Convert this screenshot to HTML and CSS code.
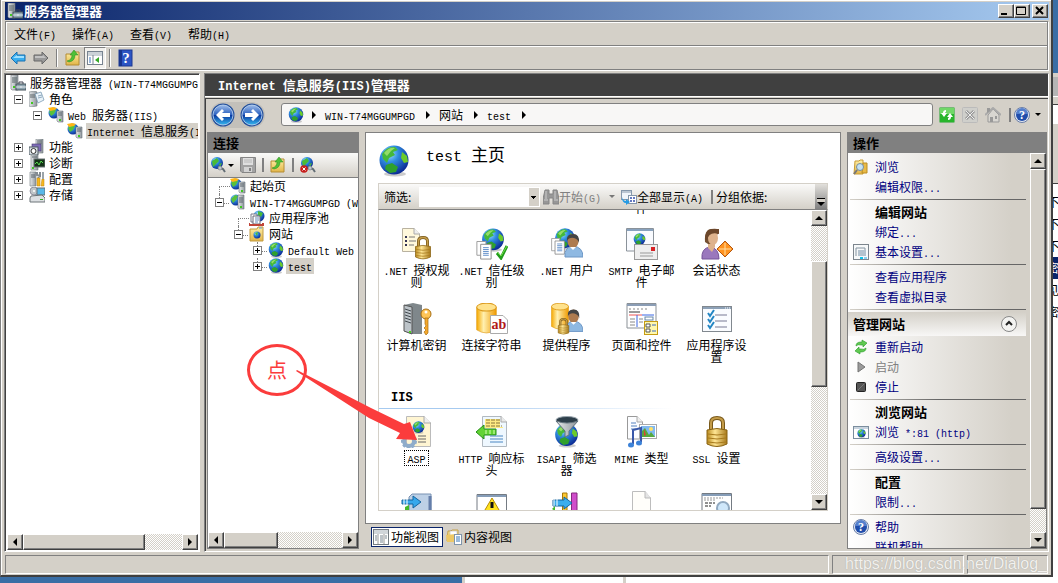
FILE: index.html
```html
<!DOCTYPE html>
<html lang="zh-CN">
<head>
    <meta charset="UTF-8">
    <meta name="viewport" content="width=device-width, initial-scale=1.0">
    <title>服务器管理器</title>
    <link rel="stylesheet" href="styles.css">
</head>
<body>
    <!-- Icon set -->
    <svg class="sprite" aria-hidden="true">
        <defs>
            <radialGradient id="sea" cx="35%" cy="28%" r="75%">
                <stop offset="0" stop-color="#9fe4ff"/><stop offset=".4" stop-color="#2f8ce0"/><stop offset="1" stop-color="#0b2a94"/>
            </radialGradient>
            <linearGradient id="gold" x1="0" x2="1" y1="0" y2="0">
                <stop offset="0" stop-color="#b98a1e"/><stop offset=".4" stop-color="#ffe694"/><stop offset="1" stop-color="#a8791a"/>
            </linearGradient>
            <linearGradient id="orange" x1="0" x2="1" y1="0" y2="0">
                <stop offset="0" stop-color="#f5a800"/><stop offset=".35" stop-color="#fff0b0"/><stop offset="1" stop-color="#f09a00"/>
            </linearGradient>
            <linearGradient id="steel" x1="0" x2="1" y1="0" y2="0">
                <stop offset="0" stop-color="#e8eaec"/><stop offset="1" stop-color="#8c949a"/>
            </linearGradient>
            <linearGradient id="orb" x1="0" x2="0" y1="0" y2="1">
                <stop offset="0" stop-color="#9dbbe8"/><stop offset=".48" stop-color="#2d62c0"/><stop offset=".52" stop-color="#0c3aa0"/><stop offset="1" stop-color="#35b8f0"/>
            </linearGradient>
            <linearGradient id="folder" x1="0" x2="0" y1="0" y2="1">
                <stop offset="0" stop-color="#fff0a8"/><stop offset="1" stop-color="#e2b548"/>
            </linearGradient>
        </defs>
        <symbol id="globe" viewBox="0 0 32 32">
            <ellipse cx="17" cy="29" rx="11" ry="2.500" fill="#999" opacity=".5"/>
            <circle cx="16" cy="15" r="14.500" fill="url(#sea)"/>
            <path d="M4 9Q9 1 17 2L20 5L15 7L17 10L11 13L9 18L5 14Z" fill="#45b83a"/>
            <path d="M24 7L29 11L30 17L26 18L23 13Z" fill="#6ccb2a"/>
            <path d="M8 20L14 18L20 22L18 27L12 28L7 24Z" fill="#2fa02c"/>
            <path d="M6 8Q11 2 17 3L13 6L9 11Z" fill="#b6ec7c" opacity=".7"/>
        </symbol>
        <symbol id="manager" viewBox="0 0 16 16">
            <path d="M1 0H8V15H2L1 14Z" fill="url(#steel)" stroke="#6c7478" stroke-width=".6"/>
            <path d="M2 3H7M2 5H7M2 7H7" stroke="#536064"/>
            <rect x="3" y="11" width="2" height="2" fill="#3fc820"/>
            <path d="M9 9V7H13V9" fill="none" stroke="#445"/>
            <rect x="6" y="9" width="10" height="6" fill="#8ea4b0" stroke="#44525a"/>
            <path d="M6 12H16M11 11V13" stroke="#e4eaee"/>
        </symbol>
        <symbol id="roles" viewBox="0 0 16 16">
            <path d="M0 1L6 0L8 1V15L2 16L0 15Z" fill="url(#steel)" stroke="#70787e" stroke-width=".6"/>
            <path d="M1 4H6M1 6H6" stroke="#5b6468"/><rect x="2" y="11" width="2" height="2" fill="#3fc820"/>
            <path d="M6 3L12 1L15 9L9 12Z" fill="#e9f3fa" stroke="#6f90aa" stroke-width=".7"/>
            <path d="M9 5L13 4M9 7L13 6" stroke="#7797b0" stroke-width=".8"/>
        </symbol>
        <symbol id="webserver" viewBox="0 0 16 16">
            <circle cx="6" cy="6" r="5.500" fill="url(#sea)"/>
            <path d="M1 5L5 2L8 3L6 7L3 9Z" fill="#58c13a"/>
            <path d="M0 1L5 0L9 1L7 3L2 4Z" fill="#ffb514"/>
            <path d="M9 4H15V15H10L9 14Z" fill="url(#steel)" stroke="#687278" stroke-width=".6"/>
            <path d="M10 6H14M10 8H14" stroke="#58636a"/><rect x="11" y="12" width="2" height="2" fill="#3fc820"/>
        </symbol>
        <symbol id="site-server" viewBox="0 0 16 16">
            <circle cx="6" cy="6" r="5.500" fill="url(#sea)"/>
            <path d="M1 5L5 1L8 2L6 6L3 9Z" fill="#58c13a"/>
            <path d="M8 1H14V15H9L8 14Z" fill="url(#steel)" stroke="#687278" stroke-width=".6"/>
            <path d="M9 4H13M9 6H13M9 8H13" stroke="#58636a"/><rect x="10" y="12" width="2" height="2" fill="#3fc820"/>
        </symbol>
        <symbol id="features" viewBox="0 0 16 16">
            <path d="M7 0H14V14H7Z" fill="url(#steel)" stroke="#70787e" stroke-width=".6"/><path d="M8 2H13M8 4H13" stroke="#59636a"/>
            <rect x="3" y="5" width="9" height="7" fill="#7e6db8" stroke="#43386e" stroke-width=".6"/>
            <rect x="0" y="8" width="9" height="8" fill="#d8e0e6" stroke="#4b575f"/><circle cx="4.500" cy="12" r="2.500" fill="#fff" stroke="#333"/>
        </symbol>
        <symbol id="diag" viewBox="0 0 16 16">
            <path d="M2 0H9V15H2Z" fill="url(#steel)" stroke="#70787e" stroke-width=".6"/><path d="M3 2H8" stroke="#59636a"/>
            <rect x="3" y="12" width="2" height="2" fill="#3fc820"/>
            <rect x="5" y="4" width="11" height="8" fill="#153218" stroke="#6d7478"/><path d="M6 9L8 7L10 10L12 6L14 8" fill="none" stroke="#58dc50"/>
        </symbol>
        <symbol id="config" viewBox="0 0 16 16">
            <path d="M1 1H7V15H1Z" fill="url(#steel)" stroke="#70787e" stroke-width=".6"/><path d="M2 4H6M2 6H6" stroke="#59636a"/>
            <path d="M8 1V4L11 5V1M9.500 4V8" fill="none" stroke="#848c92" stroke-width="2"/>
            <path d="M8 7H11V15H8ZM13 8H15V15H12Z" fill="#f7b81c" stroke="#bb8110" stroke-width=".5"/><path d="M14 1V8" stroke="#9ba4aa" stroke-width="2"/>
        </symbol>
        <symbol id="storage" viewBox="0 0 16 16">
            <circle cx="5" cy="4" r="4" fill="#bfc5c8" stroke="#778" stroke-width=".7"/><circle cx="5" cy="4" r="1" fill="#fff"/>
            <rect x="8" y="1" width="8" height="7" fill="#58b8e8" stroke="#637078"/>
            <path d="M2 9L13 8L16 11V15H1V11Z" fill="#dde0e3" stroke="#6c7478"/><rect x="11" y="12" width="3" height="1" fill="#2fb420"/>
        </symbol>
        <symbol id="arrow-l" viewBox="0 0 16 14">
            <path d="M7 1V4H15V10H7V13L1 7Z" fill="#39aef0" stroke="#1a70b0"/><path d="M3 7L7 4V5H14V7Z" fill="#9ee0ff"/>
        </symbol>
        <symbol id="arrow-r" viewBox="0 0 16 14">
            <path d="M9 1V4H1V10H9V13L15 7Z" fill="#999" stroke="#686868"/><path d="M2 5H10V4L13 7H2Z" fill="#c2c2c2"/>
        </symbol>
        <symbol id="folder-up" viewBox="0 0 16 16">
            <path d="M1 4H8L9 2H14V15H1Z" fill="url(#folder)" stroke="#b48c34"/>
            <path d="M2 11Q7 10 7 5H5L9 0L13 5H10Q10 11 4 12Z" fill="#4fc038" stroke="#26861c" stroke-width=".5"/>
        </symbol>
        <symbol id="console" viewBox="0 0 16 16">
            <rect x=".5" y="1.500" width="15" height="13" fill="#fff" stroke="#778390"/><path d="M1 3H15M1 5H15" stroke="#97a4b0"/>
            <path d="M6 5V14" stroke="#778390"/><path d="M2 8H4M2 10H4M2 12H4" stroke="#3b75bb"/><path d="M12 7V13L8 10Z" fill="#35a828"/>
        </symbol>
        <symbol id="helpbox" viewBox="0 0 16 18">
            <rect x="1" y="1" width="13" height="16" fill="#2c55c4" stroke="#1c3892"/><path d="M1 1H4V17H1Z" fill="#18358e"/>
            <text x="8" y="14" text-anchor="middle" class="help-mark">?</text>
        </symbol>
        <symbol id="help" viewBox="0 0 16 16">
            <circle cx="8" cy="8" r="7.500" fill="#e4e9f2" stroke="#697da6"/><circle cx="8" cy="8" r="6" fill="#204dab"/><path d="M2 7A6 6 0 0 1 14 7Z" fill="#557fcc"/>
            <text x="8" y="12" text-anchor="middle" class="help-mark small">?</text>
        </symbol>
        <symbol id="orb-l" viewBox="0 0 24 24">
            <circle cx="12" cy="12" r="11.500" fill="#24509c"/><circle cx="12" cy="12" r="10" fill="url(#orb)" stroke="#c4dcf5" stroke-width=".8"/>
            <path d="M11 6L5 12L11 18L13 16L11 14H19V10H11L13 8Z" fill="#fff"/>
        </symbol>
        <symbol id="orb-r" viewBox="0 0 24 24">
            <circle cx="12" cy="12" r="11.500" fill="#24509c"/><circle cx="12" cy="12" r="10" fill="url(#orb)" stroke="#c4dcf5" stroke-width=".8"/>
            <path d="M13 6L19 12L13 18L11 16L13 14H5V10H13L11 8Z" fill="#fff"/>
        </symbol>
        <symbol id="refresh" viewBox="0 0 16 16">
            <rect x=".5" y=".5" width="15" height="15" rx="1" fill="#28b52c" stroke="#77b977"/><path d="M1 1H15V7H1Z" fill="#70d867"/>
            <path d="M7 3Q4 3 4 6H2L5 10L8 6H6Q6 5 7 5ZM9 13Q12 13 12 10H14L11 6L8 10H10Q10 11 9 11Z" fill="#fff"/>
        </symbol>
        <symbol id="stop" viewBox="0 0 16 16">
            <rect x=".5" y=".5" width="15" height="15" rx="1" fill="#cfcfcb" stroke="#bbb"/><path d="M4 4L12 12M12 4L4 12" stroke="#999" stroke-width="3"/><path d="M4 4L12 12M12 4L4 12" stroke="#eee"/>
        </symbol>
        <symbol id="home" viewBox="0 0 16 16">
            <path d="M3 8V15H14V8L8 2Z" fill="#d8d6d1" stroke="#999"/><path d="M0 8L8 1L16 8" fill="none" stroke="#aaa" stroke-width="2"/><path d="M2 1H5V4L2 6Z" fill="#999"/><path d="M5 10H8V15H5ZM10 9H12V12H10Z" fill="#999"/>
        </symbol>
        <symbol id="globe-plug" viewBox="0 0 16 16">
            <circle cx="7" cy="6" r="6" fill="url(#sea)"/><path d="M2 4L7 1L9 4L5 8L3 10ZM9 7L12 6L10 10Z" fill="#4abb37"/><path d="M8 10L13 12L15 15" fill="none" stroke="#626d74" stroke-width="2"/><circle cx="10" cy="11" r="2" fill="#bbc4ca" stroke="#67717a" stroke-width=".6"/>
        </symbol>
        <symbol id="globe-cut" viewBox="0 0 16 16">
            <use href="#globe-plug"/><circle cx="4" cy="12" r="3.800" fill="#c61f1d"/><path d="M2.500 10.500L5.500 13.500M5.500 10.500L2.500 13.500" stroke="#fff"/>
        </symbol>
        <symbol id="floppy" viewBox="0 0 16 16">
            <path d="M.5.5H15.500V15.500H2L.5 14Z" fill="#a2a2a2" stroke="#858585"/><rect x="3" y="1" width="10" height="7" fill="#dfdfdf"/><path d="M4 3H12M4 5H12" stroke="#b8b8b8"/><rect x="4" y="10" width="8" height="5" fill="#d3d3d3"/><rect x="9" y="11" width="2" height="3" fill="#808080"/>
        </symbol>
        <symbol id="pool" viewBox="0 0 16 16">
            <circle cx="10" cy="6" r="5.500" fill="url(#sea)"/><path d="M9 1L14 3L12 7L9 5Z" fill="#4abb37"/>
            <path d="M2 4H8V12H2Z" fill="#fff" stroke="#778"/><path d="M4 6H11V14H4Z" fill="#fff" stroke="#667"/><path d="M6 8H10M6 10H10M6 12H9" stroke="#6889b8"/><path d="M0 13V15H14V13" fill="none" stroke="#c04438" stroke-width="2"/>
        </symbol>
        <symbol id="sites" viewBox="0 0 16 16">
            <path d="M1 3H8L9 1H14V15H1Z" fill="url(#folder)" stroke="#c29b40"/><path d="M10 2H13" stroke="#5e9fe0"/><circle cx="8" cy="9" r="3.500" fill="url(#sea)"/><path d="M6 7L9 6L8 10Z" fill="#50bc35"/>
        </symbol>
        <symbol id="binoculars" viewBox="0 0 16 16">
            <path d="M2 1H6V5H10V1H14L16 10V15H10V9H6V15H0V10Z" fill="#979797" stroke="#858585"/><path d="M3 2V10M12 2V10M1 11H5M11 11H15" stroke="#cdcdcd"/>
        </symbol>
        <symbol id="showall" viewBox="0 0 16 16">
            <rect x=".5" y="1.500" width="10" height="9" fill="#f0f5fa" stroke="#8597ab"/><path d="M1 3H10" stroke="#8597ab"/><rect x="7.500" y="6.500" width="8" height="8" fill="#fff" stroke="#8496aa"/>
            <path d="M9 9H11M12 9H14M9 12H11M12 12H14" stroke="#6479c0" stroke-width="2"/><path d="M1 8Q2 12 5 12V10L9 13L5 16V14Q1 14 1 8Z" fill="#259be4"/>
        </symbol>
        <symbol id="lock" viewBox="0 0 32 32">
            <path d="M10 16V7Q10 2 16 2T22 7V16" fill="none" stroke="#79591a" stroke-width="4"/><path d="M10 15V7Q10 2 16 2T22 7V15" fill="none" stroke="#c49c49" stroke-width="2"/>
            <path d="M6 14Q16 11 26 14V28Q16 33 6 28Z" fill="url(#gold)" stroke="#896313"/><path d="M7 18Q16 20 25 18M7 22Q16 24 25 22M7 26Q16 28 25 26" fill="none" stroke="#a77a1d"/>
        </symbol>
        <symbol id="doc" viewBox="0 0 32 32">
            <path d="M6.500.5H19L24.500 7V29.500H6.500Z" fill="#fffefa" stroke="#bdbdbd"/><path d="M19 0V7H25" fill="#e4e4e4" stroke="#bbb"/>
        </symbol>
        <symbol id="person" viewBox="0 0 20 24">
            <path d="M1 23Q0 13 9 12Q19 13 19 23Z" fill="#8fb9e2" stroke="#6c96c5"/><ellipse cx="9" cy="7" rx="5.500" ry="7" fill="#ae7b4f"/><path d="M3 7Q2 0 9 0T15 9Q14 5 10 4Q5 3 3 7Z" fill="#444"/><path d="M6 13L9 16L12 13Z" fill="#fff"/>
        </symbol>
        <symbol id="papers" viewBox="0 0 16 20">
            <path d="M.5.5H10V15H.5Z" fill="#fff" stroke="#9b9b9b"/><path d="M4.500 3.500H15.500V19H4.500Z" fill="#fff" stroke="#8c8c8c"/><path d="M7 7H13M7 9H13M7 11H13M7 13H13M7 15H13" stroke="#5889c6"/>
        </symbol>
        <symbol id="cylinder" viewBox="0 0 20 30">
            <path d="M.5 4V26Q10 32 19.500 26V4Z" fill="url(#orange)" stroke="#df960a" stroke-width=".6"/><ellipse cx="10" cy="4" rx="9.500" ry="3.800" fill="#ffe28c" stroke="#dc9b1d"/>
        </symbol>
        <symbol id="frame" viewBox="0 0 32 32">
            <rect x="1.500" y="3.500" width="29" height="25" fill="#fafcff" stroke="#81888f"/><path d="M2 5H30" stroke="#8da1b7" stroke-width="2"/><path d="M24 5H29" stroke="#fff" stroke-dasharray="1 1"/>
        </symbol>
        <symbol id="net-auth" viewBox="0 0 32 32">
            <path d="M1.500.5H13L18.500 6V23.500H1.500Z" fill="#fff8dc" stroke="#b9b2a0"/><path d="M13 0V6H19" fill="#eee" stroke="#aaa"/><path d="M4 9H6M4 13H6M4 17H6" stroke="#335" stroke-width="2"/><path d="M8 9H14M8 13H15M8 17H13" stroke="#777"/>
            <use href="#lock" x="10" y="8" width="24" height="24"/>
        </symbol>
        <symbol id="net-trust" viewBox="0 0 32 32">
            <use href="#globe" x="5" y="0" width="24" height="24"/><use href="#papers" x="0" y="13" width="16" height="19"/><path d="M21 25L25 30L31 18" fill="none" stroke="#229c1c" stroke-width="3"/><path d="M21 24L25 28L31 18" fill="none" stroke="#72dc48"/>
        </symbol>
        <symbol id="net-users" viewBox="0 0 32 32">
            <use href="#globe" x="3" y="0" width="22" height="22"/><use href="#papers" x="0" y="10" width="14" height="17"/><use href="#person" x="13" y="4" width="20" height="28"/>
        </symbol>
        <symbol id="smtp" viewBox="0 0 32 32">
            <path d="M.5.5H27.500V23H.5Z" fill="#f9fbff" stroke="#8a929a"/><path d="M1 2H27" stroke="#88a2be" stroke-width="2"/><use href="#globe" x="7" y="5" width="13" height="13"/>
            <rect x="8.500" y="16.500" width="23" height="15" fill="#eee" stroke="#999"/><rect x="25" y="19" width="4" height="4" fill="#d72125"/><path d="M14 25H27M14 28H27" stroke="#999"/>
        </symbol>
        <symbol id="session" viewBox="0 0 32 32">
            <path d="M1 31Q0 20 9 19Q18 20 18 31Z" fill="#9a78bd" stroke="#755499"/><path d="M7 20L11 24L14 19V14H7Z" fill="#deb38d"/><path d="M4 14Q3 1 11 1H18V4L10 16H7Z" fill="#745032"/><ellipse cx="12" cy="10" rx="5" ry="7" fill="#deb38d"/><path d="M6 12Q8 3 18 6V2Q16 0 10 1Q4 2 4 12Z" fill="#6c472b"/>
            <path d="M24 13L32 21L24 29L16 21Z" fill="#ff931f" stroke="#b45610"/><path d="M24 15V27M18 21H30" stroke="#ffdfa6"/>
        </symbol>
        <symbol id="machine-key" viewBox="0 0 32 32">
            <path d="M3 2L12 0L21 2V31H10L3 28Z" fill="#7f878b"/><path d="M3 2L11 4V31L3 28Z" fill="#bdc4c9" stroke="#555"/><path d="M4 6L10 8M4 9L10 11M4 12L10 14M4 15L10 17M4 18L10 20" stroke="#42494e"/><rect x="8" y="28" width="2" height="2" fill="#48d21e"/>
            <circle cx="25" cy="11" r="5" fill="#ffc456" stroke="#a76e12"/><circle cx="25" cy="9" r="1.500" fill="#fff"/><path d="M24 15H27V30L25 32L23 29L25 27L23 25L25 23L24 21Z" fill="#f5a82c" stroke="#a76e12" stroke-width=".7"/>
        </symbol>
        <symbol id="connstr" viewBox="0 0 32 32">
            <use href="#cylinder" x="0" y="0" width="21" height="31"/><path d="M14.500 12.500H27L31.500 17V30.500H14.500Z" fill="#fff" stroke="#aaa"/><text x="23" y="26" text-anchor="middle" class="ab-mark">ab</text>
        </symbol>
        <symbol id="providers" viewBox="0 0 32 32">
            <use href="#cylinder" x="0" y="0" width="18" height="27"/><use href="#person" x="14" y="5" width="19" height="26"/><use href="#lock" x="4" y="15" width="17" height="17"/>
        </symbol>
        <symbol id="controls" viewBox="0 0 32 32">
            <path d="M1 .5H30V25H1Z" fill="#fff" stroke="#8b9197"/><path d="M1 2H30" stroke="#8b9db5" stroke-width="2"/><path d="M3 6H22" stroke="#888" stroke-dasharray="2 2"/><path d="M3 9H14" stroke="#333"/><path d="M3 12H16" stroke="#e55"/><path d="M16 12H28M11 12V24" stroke="#3a66e4"/><path d="M4 16H9M4 19H9M4 22H9M13 16H17M13 19H17" stroke="#888"/><rect x="19" y="14" width="8" height="3" fill="none" stroke="#68a"/>
            <rect x="18.500" y="18.500" width="13" height="13" fill="#fff8ad" stroke="#c59b13"/><path d="M20 21H24V24H20ZM20 26H24V29H20Z" fill="#fff" stroke="#555"/><path d="M26 22H30M26 28H30" stroke="#3d69c2"/>
        </symbol>
        <symbol id="appset" viewBox="0 0 32 32">
            <use href="#frame"/><path d="M7 10L9 13L13 7M7 16L9 19L13 13M7 22L9 25L13 19" fill="none" stroke="#2386c4" stroke-width="2"/><path d="M14 12H26M14 18H26M14 24H26" stroke="#767894"/>
        </symbol>
        <symbol id="asp" viewBox="0 0 32 32">
            <path d="M5.500.5H23L29.500 7V30.500H5.500Z" fill="#fff5d2" stroke="#bbb"/><path d="M23 0V7H30" fill="#eee" stroke="#aaa"/><use href="#globe" x="11" y="5" width="13" height="13"/><path d="M17 20H25M17 23H25M17 26H25" stroke="#666"/>
            <circle cx="8" cy="25" r="5" fill="none" stroke="#8facca" stroke-width="4"/><circle cx="8" cy="25" r="7" fill="none" stroke="#8facca" stroke-width="2" stroke-dasharray="3 2"/>
        </symbol>
        <symbol id="http" viewBox="0 0 32 32">
            <path d="M6.500.5H25L30.500 6V30.500H6.500Z" fill="#eff8ff" stroke="#b1b9c0"/><path d="M25 0V6H31" fill="#e9e9e9" stroke="#aaa"/><path d="M9 3H24V11H27V12H9Z" fill="#ffeb83"/><path d="M10 4H24M10 7H25M10 10H26" stroke="#89763b" stroke-dasharray="4 1"/>
            <path d="M0 16L8 9V13H20V19H8V23Z" fill="#62d334" stroke="#268e1b"/><path d="M10 14V18M14 14V18M18 14V18" stroke="#d4ffb2"/><path d="M14 20H27M14 23H27M14 26H27" stroke="#4b86c2"/>
        </symbol>
        <symbol id="isapi" viewBox="0 0 32 32">
            <use href="#globe" x="3" y="7" width="25" height="25"/><ellipse cx="16" cy="4" rx="11" ry="3.500" fill="#2e3f4b" stroke="#99a5ad"/><path d="M5 5L14 15V21L18 19V15L27 5Q16 9 5 5Z" fill="url(#steel)" stroke="#61717b"/>
        </symbol>
        <symbol id="mime" viewBox="0 0 32 32">
            <path d="M1.500.5H11L16.500 6V23H1.500Z" fill="#fcfdff" stroke="#999"/><path d="M11 0V6H17" fill="#eee" stroke="#aaa"/><path d="M5 7H10M5 10H11M5 13H10" stroke="#5481be"/>
            <rect x="13.500" y="8.500" width="17" height="14" fill="#fff" stroke="#aaa"/><rect x="15" y="10" width="14" height="11" fill="#80b9f0"/><path d="M15 21V16L19 12L23 19L25 16L29 21Z" fill="#55a93e"/><circle cx="25" cy="13" r="2" fill="#ffe165"/><path d="M18 13L20 19L18 20Z" fill="#db4136"/>
            <path d="M7 28V14L15 12V26" fill="none" stroke="#3857a8" stroke-width="2"/><ellipse cx="5" cy="29" rx="3" ry="2.500" fill="#3c82d8"/><ellipse cx="13" cy="27" rx="3" ry="2.500" fill="#3c82d8"/>
        </symbol>
        <symbol id="box-in" viewBox="0 0 32 32">
            <path d="M8 6L11 3H30V30H8Z" fill="#bdd0e6" stroke="#7991b2"/><path d="M29 5V30" stroke="#647eaa" stroke-width="3"/><path d="M1 9H12V5L20 11L12 17V13H1Z" fill="#36a8ec" stroke="#15649f"/><path d="M3 8V14M6 8V14" stroke="#fff"/><path d="M4 16L8 14V20H4Z" fill="#44b82b"/>
        </symbol>
        <symbol id="warn" viewBox="0 0 32 32">
            <path d="M1 3.500H30.500V31H1Z" fill="#fff" stroke="#747b83"/><path d="M1 5H30" stroke="#869db8" stroke-width="2"/><path d="M16 7L26 24H6Z" fill="#ffe320" stroke="#b88b00"/><path d="M16 11V17" stroke="#111" stroke-width="3"/>
        </symbol>
        <symbol id="modules" viewBox="0 0 32 32">
            <path d="M11.500 2H16V30H11.500Z" fill="#ffc930" stroke="#a87807"/><path d="M20.500 2H26V30H20.500Z" fill="#d04dcb" stroke="#85287f"/><path d="M2 9H13V6L21 12L13 18V15H2Z" fill="#3baeed" stroke="#15649f"/><path d="M3 8V15M6 8V15" stroke="#fff"/><path d="M1 18L4 15V20Z" fill="#44b82b"/>
        </symbol>
        <symbol id="find-doc" viewBox="0 0 32 32">
            <path d="M1 2.500H30.500V31H1Z" fill="#fff" stroke="#747b83"/><path d="M1 4H30" stroke="#869db8" stroke-width="2"/><path d="M3 7H22M3 9H14" stroke="#999" stroke-dasharray="2 1"/><path d="M4 12H14M4 15H10" stroke="#222" stroke-dasharray="3 1"/><circle cx="22" cy="17" r="6" fill="#cfe7fa" stroke="#91a9c0" stroke-width="2"/>
        </symbol>
        <symbol id="browse" viewBox="0 0 16 16">
            <path d="M2 2H6L7 1H10V15H1Z" fill="url(#folder)" stroke="#c89c34"/><path d="M10 4H14V14H9Z" fill="#e9ba46" stroke="#ba8c23"/><path d="M4 11L1 15" stroke="#777" stroke-width="2"/><circle cx="7" cy="8" r="3.500" fill="#c4e2f4" stroke="#768c9c"/>
        </symbol>
        <symbol id="settings" viewBox="0 0 16 16">
            <rect x=".5" y=".5" width="15" height="15" fill="#f7f9fa" stroke="#7c858d"/><path d="M3 4H12V6M3 4V12" fill="none" stroke="#8594a0"/><path d="M5 7H13M5 9H13M5 11H13" stroke="#738da4"/><path d="M7 14H10" stroke="#13c3e8" stroke-width="2"/><path d="M11 14H14" stroke="#23a8e8"/>
        </symbol>
        <symbol id="restart" viewBox="0 0 16 16">
            <path d="M3 7Q3 3 8 3H9V1L14 4L10 8V6H8Q5 5 3 7ZM13 9Q13 13 8 13H7V15L2 12L6 8V10H8Q11 11 13 9Z" fill="#60c951" stroke="#279a28" stroke-width=".6"/>
        </symbol>
        <symbol id="start" viewBox="0 0 16 16"><path d="M5 3L12 8L5 13Z" fill="#9b9b9b" stroke="#757575"/></symbol>
        <symbol id="halt" viewBox="0 0 16 16"><rect x="3.500" y="3.500" width="9" height="9" rx="1" fill="#555" stroke="#222"/><path d="M5 11L11 5" stroke="#777"/></symbol>
        <symbol id="site-link" viewBox="0 0 16 16">
            <rect x=".5" y="2.500" width="15" height="12" fill="#fff" stroke="#7b8d9e"/><path d="M1 4H15" stroke="#92a8bd"/><use href="#globe" x="4" y="5" width="9" height="9"/>
        </symbol>
        <symbol id="feature-view" viewBox="0 0 16 16">
            <rect x=".5" y=".5" width="15" height="15" fill="#fff" stroke="#747b81"/><path d="M1 2H15M1 4H15" stroke="#a3acb4"/><path d="M5 5V15M11 5V15" stroke="#999"/><path d="M2 7H4M2 9H4M2 11H4M7 7H10M7 9H10M7 11H10M7 13H10M12 7H14M12 9H14" stroke="#7a8791"/>
        </symbol>
        <symbol id="content-view" viewBox="0 0 16 16">
            <path d="M2 2H5L6 1H12V12H1Z" fill="url(#folder)" stroke="#c49e49"/><path d="M4 2H11V8H4Z" fill="#fff" stroke="#aaa" stroke-width=".5"/><path d="M0 6L10 5L9 13H1Z" fill="#edc866"/><rect x="8.500" y="5.500" width="7" height="10" fill="#fff" stroke="#8095aa"/><path d="M10 8H14M10 10H14M10 12H14" stroke="#3676b8"/>
        </symbol>
    </svg>

    <div class="window">
        <header class="titlebar">
            <svg class="i16"><use href="#manager"/></svg>
            <h1>服务器管理器</h1>
            <div class="caption-buttons">
                <button class="bevel" aria-label="最小化"><svg viewBox="0 0 12 10"><path d="M2 8H8" stroke="#000" stroke-width="2"/></svg></button>
                <button class="bevel" aria-label="最大化"><svg viewBox="0 0 12 10"><path d="M1.500 1H10.500V8.500H1.500ZM1 1.500H11" fill="none" stroke="#000"/></svg></button>
                <button class="bevel close" aria-label="关闭"><svg viewBox="0 0 12 10"><path d="M3 1L10 8M10 1L3 8" stroke="#000" stroke-width="2"/></svg></button>
            </div>
        </header>

        <div class="bars">
            <nav class="menubar">
                <button>文件<span class="en">(F)</span></button>
                <button>操作<span class="en">(A)</span></button>
                <button>查看<span class="en">(V)</span></button>
                <button>帮助<span class="en">(H)</span></button>
            </nav>
            <div class="toolbar">
                <button aria-label="后退"><svg class="i16"><use href="#arrow-l"/></svg></button>
                <button aria-label="前进"><svg class="i16"><use href="#arrow-r"/></svg></button>
                <span class="sep"></span>
                <button aria-label="上一级"><svg class="i16"><use href="#folder-up"/></svg></button>
                <button class="pressed" aria-label="显示控制台树"><svg class="i16"><use href="#console"/></svg></button>
                <span class="sep"></span>
                <button aria-label="帮助"><svg class="i18"><use href="#helpbox"/></svg></button>
            </div>
        </div>

        <main class="workspace">
            <section class="console-tree">
                <ul class="tree">
                    <li class="root"><svg class="i16"><use href="#manager"/></svg><span>服务器管理器<span class="en"> (WIN-T74MGGUMPGD)</span></span></li>
                    <li class="l1"><i class="box minus"></i><svg class="i16"><use href="#roles"/></svg><span>角色</span></li>
                    <li class="l2"><i class="box minus"></i><svg class="i16"><use href="#webserver"/></svg><span><span class="en">Web </span>服务器<span class="en">(IIS)</span></span></li>
                    <li class="l3"><i class="box none"></i><svg class="i16"><use href="#webserver"/></svg><span class="picked wide"><span class="en">Internet </span>信息服务<span class="en">(IIS)</span></span></li>
                    <li class="l1"><i class="box plus"></i><svg class="i16"><use href="#features"/></svg><span>功能</span></li>
                    <li class="l1"><i class="box plus"></i><svg class="i16"><use href="#diag"/></svg><span>诊断</span></li>
                    <li class="l1"><i class="box plus"></i><svg class="i16"><use href="#config"/></svg><span>配置</span></li>
                    <li class="l1"><i class="box plus"></i><svg class="i16"><use href="#storage"/></svg><span>存储</span></li>
                </ul>
                <div class="scroll-x">
                    <button class="bevel left" aria-label="向左滚动"></button>
                    <div class="bevel thumb long"></div>
                    <div class="track"></div>
                    <button class="bevel right" aria-label="向右滚动"></button>
                </div>
            </section>

            <section class="snapin">
                <h2 class="snapin-title"><span class="en">Internet </span>信息服务<span class="en">(IIS)</span>管理器</h2>
                <div class="snapin-body">
                    <div class="navbar">
                        <div class="history">
                            <button aria-label="返回"><svg class="i24"><use href="#orb-l"/></svg></button>
                            <button aria-label="前进"><svg class="i24"><use href="#orb-r"/></svg></button>
                        </div>
                        <div class="address">
                            <svg class="i16"><use href="#globe"/></svg>
                            <i class="chevron"></i><a href="#"><span class="en">WIN-T74MGGUMPGD</span></a>
                            <i class="chevron"></i><a href="#">网站</a>
                            <i class="chevron"></i><a href="#"><span class="en">test</span></a>
                            <i class="chevron"></i>
                        </div>
                        <div class="nav-tools">
                            <button aria-label="刷新"><svg class="i16"><use href="#refresh"/></svg></button>
                            <button aria-label="停止"><svg class="i16"><use href="#stop"/></svg></button>
                            <button aria-label="主页"><svg class="i16"><use href="#home"/></svg></button>
                        </div>
                        <div class="nav-help">
                            <button aria-label="帮助"><svg class="i16"><use href="#help"/></svg></button>
                            <i class="caret"></i>
                        </div>
                    </div>

                    <div class="columns">
                        <section class="connections">
                            <h3 class="pane-title">连接</h3>
                            <div class="conn-tools">
                                <button aria-label="连接"><svg class="i16"><use href="#globe-plug"/></svg><i class="caret"></i></button>
                                <button aria-label="保存"><svg class="i16"><use href="#floppy"/></svg></button>
                                <span class="bar"></span>
                                <button aria-label="向上"><svg class="i16"><use href="#folder-up"/></svg></button>
                                <span class="bar"></span>
                                <button aria-label="断开"><svg class="i16"><use href="#globe-cut"/></svg></button>
                            </div>
                            <ul class="tree lined">
                                <li class="l1 down"><i class="box none"></i><svg class="i16"><use href="#webserver"/></svg><span>起始页</span></li>
                                <li class="l1"><i class="box minus"></i><svg class="i16"><use href="#site-server"/></svg><span><span class="en">WIN-T74MGGUMPGD (WIN</span></span></li>
                                <li class="l2 down"><i class="box none"></i><svg class="i16"><use href="#pool"/></svg><span>应用程序池</span></li>
                                <li class="l2"><i class="box minus"></i><svg class="i16"><use href="#sites"/></svg><span>网站</span></li>
                                <li class="l3"><i class="box plus"></i><svg class="i16"><use href="#globe"/></svg><span><span class="en">Default Web Site</span></span></li>
                                <li class="l3"><i class="box plus"></i><svg class="i16"><use href="#globe"/></svg><span class="picked"><span class="en">test</span></span></li>
                            </ul>
                            <div class="scroll-x">
                                <button class="bevel left" aria-label="向左滚动"></button>
                                <div class="bevel thumb short"></div>
                                <div class="track"></div>
                                <button class="bevel right" aria-label="向右滚动"></button>
                            </div>
                        </section>

                        <section class="center">
                            <div class="page">
                                <div class="page-title">
                                    <svg class="i32"><use href="#globe"/></svg>
                                    <h2><span class="en">test </span>主页</h2>
                                </div>
                                <div class="filterbar">
                                    <label for="filter">筛选:</label>
                                    <select id="filter"><option></option></select>
                                    <button class="go" disabled><svg class="i16"><use href="#binoculars"/></svg><span>开始<span class="en">(G)</span></span></button>
                                    <i class="caret dim"></i>
                                    <button><svg class="i16"><use href="#showall"/></svg><span>全部显示<span class="en">(A)</span></span></button>
                                    <span class="bar"></span>
                                    <span class="group-by">分组依据:</span>
                                    <button class="overflow" aria-label="更多"><i class="caret"></i></button>
                                </div>
                                <div class="list">
                                    <div class="features">
                                        <div class="grid cut"><span class="cut-label">件</span></div>
                                        <div class="grid">
                                            <a href="#"><svg class="i32"><use href="#net-auth"/></svg><span><span class="en">.NET </span>授权规则</span></a>
                                            <a href="#"><svg class="i32"><use href="#net-trust"/></svg><span><span class="en">.NET </span>信任级别</span></a>
                                            <a href="#"><svg class="i32"><use href="#net-users"/></svg><span><span class="en">.NET </span>用户</span></a>
                                            <a href="#"><svg class="i32"><use href="#smtp"/></svg><span><span class="en">SMTP </span>电子邮件</span></a>
                                            <a href="#"><svg class="i32"><use href="#session"/></svg><span>会话状态</span></a>
                                            <a href="#"><svg class="i32"><use href="#machine-key"/></svg><span>计算机密钥</span></a>
                                            <a href="#"><svg class="i32"><use href="#connstr"/></svg><span>连接字符串</span></a>
                                            <a href="#"><svg class="i32"><use href="#providers"/></svg><span>提供程序</span></a>
                                            <a href="#"><svg class="i32"><use href="#controls"/></svg><span>页面和控件</span></a>
                                            <a href="#"><svg class="i32"><use href="#appset"/></svg><span>应用程序设置</span></a>
                                        </div>
                                        <h3 class="group-title"><span class="en">IIS</span></h3>
                                        <div class="grid">
                                            <a href="#" class="focused"><svg class="i32"><use href="#asp"/></svg><span><span class="en">ASP</span></span></a>
                                            <a href="#"><svg class="i32"><use href="#http"/></svg><span><span class="en">HTTP </span>响应标头</span></a>
                                            <a href="#"><svg class="i32"><use href="#isapi"/></svg><span><span class="en">ISAPI </span>筛选器</span></a>
                                            <a href="#"><svg class="i32"><use href="#mime"/></svg><span><span class="en">MIME </span>类型</span></a>
                                            <a href="#"><svg class="i32"><use href="#lock"/></svg><span><span class="en">SSL </span>设置</span></a>
                                            <a href="#" aria-label="处理程序映射"><svg class="i32"><use href="#box-in"/></svg></a>
                                            <a href="#" aria-label="错误页"><svg class="i32"><use href="#warn"/></svg></a>
                                            <a href="#" aria-label="模块"><svg class="i32"><use href="#modules"/></svg></a>
                                            <a href="#" aria-label="默认文档"><svg class="i32"><use href="#doc"/></svg></a>
                                            <a href="#" aria-label="目录浏览"><svg class="i32"><use href="#find-doc"/></svg></a>
                                        </div>
                                    </div>
                                    <div class="scroll-y">
                                        <button class="bevel up" aria-label="向上滚动"></button>
                                        <div class="track above"></div>
                                        <div class="bevel thumb middle"></div>
                                        <div class="track"></div>
                                        <button class="bevel down" aria-label="向下滚动"></button>
                                    </div>
                                </div>
                            </div>
                            <div class="view-tabs">
                                <button class="active"><svg class="i16"><use href="#feature-view"/></svg>功能视图</button>
                                <button><svg class="i16"><use href="#content-view"/></svg>内容视图</button>
                            </div>
                        </section>

                        <aside class="actions">
                            <h3 class="pane-title">操作</h3>
                            <div class="actions-body">
                                <div class="action-list">
                                    <a href="#"><svg class="i16"><use href="#browse"/></svg>浏览</a>
                                    <a href="#"><span>编辑权限<span class="en">...</span></span></a>
                                    <hr>
                                    <h4>编辑网站</h4>
                                    <a href="#"><span>绑定<span class="en">...</span></span></a>
                                    <a href="#"><svg class="i16"><use href="#settings"/></svg><span>基本设置<span class="en">...</span></span></a>
                                    <hr>
                                    <a href="#">查看应用程序</a>
                                    <a href="#">查看虚拟目录</a>
                                    <hr>
                                    <div class="section-head">管理网站
                                        <button aria-label="折叠"><svg viewBox="0 0 16 16"><circle cx="8" cy="8" r="7.500" fill="#f3f3f1" stroke="#888"/><path d="M5 9L8 6L11 9" fill="none" stroke="#222" stroke-width="2"/></svg></button>
                                    </div>
                                    <a href="#"><svg class="i16"><use href="#restart"/></svg>重新启动</a>
                                    <a href="#" class="off"><svg class="i16"><use href="#start"/></svg>启动</a>
                                    <a href="#"><svg class="i16"><use href="#halt"/></svg>停止</a>
                                    <hr>
                                    <h4>浏览网站</h4>
                                    <a href="#"><svg class="i16"><use href="#site-link"/></svg><span>浏览<span class="en"> *:81 (http)</span></span></a>
                                    <hr>
                                    <a href="#"><span>高级设置<span class="en">...</span></span></a>
                                    <hr>
                                    <h4>配置</h4>
                                    <a href="#"><span>限制<span class="en">...</span></span></a>
                                    <hr>
                                    <a href="#"><svg class="i16"><use href="#help"/></svg>帮助</a>
                                    <a href="#">联机帮助</a>
                                </div>
                                <div class="scroll-y">
                                    <button class="bevel up" aria-label="向上滚动"></button>
                                    <div class="bevel thumb tall"></div>
                                    <div class="track"></div>
                                    <button class="bevel down" aria-label="向下滚动"></button>
                                </div>
                            </div>
                        </aside>
                    </div>
                </div>
            </section>
        </main>

        <footer class="statusbar">
            <div class="cell grow"></div>
            <div class="cell"></div>
            <div class="cell slim"></div>
        </footer>
    </div>

    <!-- Windows that show behind this one -->
    <div class="behind-right">
        <div class="gray-bar"></div>
        <div class="field"></div>
        <div class="gray-block"></div>
        <div class="rows"><span>不</span><span>不</span><span>不</span><span class="sel">密</span><span>见</span><span>密</span></div>
    </div>
    <div class="behind-bottom"><div class="desktop"></div><div class="sheet"></div><div class="rest"></div></div>

    <!-- Annotation -->
    <div class="callout">点</div>
    <svg class="pointer" viewBox="0 0 122 74"><path d="M0 1L1 0L75 38L108 54L114 52L121 70L100 69L104 63L73 48Z" fill="#fb3c3c"/></svg>
    <div class="watermark">https://blog.csdn.net/Dialog_</div>
</body>
</html>
```
FILE: styles.css
```css
* {
    margin: 0;
    padding: 0;
    box-sizing: border-box;
}

body {
    position: relative;
    display: grid;
    grid-template-columns: 1fr 5px;
    grid-template-rows: 1fr 6px;
    height: 100vh;
    overflow: hidden;
    background: #d4d0c8;
    font: 12px/16px "Noto Sans CJK SC", sans-serif;
    color: #000;
}

button, select {
    font: inherit;
    color: inherit;
    border: 0;
    border-radius: 0;
    background: none;
}

a {
    color: inherit;
    text-decoration: none;
}

ul {
    list-style: none;
}

svg {
    display: block;
    flex: none;
}

/* Latin text is set half as wide as a Chinese character */
.en {
    font-family: "Liberation Mono", monospace;
    font-size: 10px;
    line-height: 0;
    white-space: pre;
}

.sprite {
    position: absolute;
    width: 0;
    height: 0;
}

.i16 { width: 16px; height: 16px; }
.i18 { width: 16px; height: 18px; }
.i24 { width: 24px; height: 24px; }
.i32 { width: 32px; height: 32px; }

.help-mark {
    font: bold 15px "Liberation Serif", serif;
    fill: #fff;
}

.help-mark.small {
    font-size: 12px;
}

.ab-mark {
    font: bold 14px "Liberation Serif", serif;
    fill: #b01818;
}

.bevel {
    background: #d4d0c8;
    border: 1px solid;
    border-color: #fff #404040 #404040 #fff;
    box-shadow: inset -1px -1px #808080;
}

.caret {
    width: 0;
    height: 0;
    border: 3px solid transparent;
    border-top-color: #000;
    border-bottom: 0;
}

.caret.dim {
    border-top-color: #777;
}

/* Window frame */
.window {
    display: flex;
    flex-direction: column;
    min-width: 0;
    min-height: 0;
    padding: 1px 2px 0 3px;
    border: 1px solid #404040;
    border-width: 0 2px 2px 1px;
    border-left-color: #808080;
    background: #d4d0c8;
    box-shadow: inset 1px 1px #fff;
}

.titlebar {
    display: flex;
    align-items: center;
    height: 18px;
    margin: 1px 0 1px 1px;
    padding: 0 1px 0 2px;
    background: linear-gradient(90deg, #0a246a, #a6caf0);
    color: #fff;
}

.titlebar h1 {
    flex: 1;
    margin-left: 1px;
    font-size: 13px;
    line-height: 18px;
}

.caption-buttons {
    display: flex;
}

.caption-buttons button {
    width: 16px;
    height: 14px;
}

.caption-buttons svg {
    width: 12px;
    height: 10px;
}

.caption-buttons .close {
    margin-left: 2px;
}

.bars {
    margin: 0 1px;
    border: 1px solid #808080;
    box-shadow: inset 1px 1px #fff, 1px 1px #fff;
}

.menubar {
    display: flex;
    gap: 16px;
    height: 24px;
    padding: 0 8px;
    border-bottom: 1px solid #808080;
}

.menubar button {
    line-height: 23px;
}

.toolbar {
    display: flex;
    align-items: center;
    gap: 7px;
    height: 23px;
    padding-left: 4px;
    border-top: 1px solid #fff;
}

.toolbar .sep {
    width: 2px;
    height: 18px;
    border-left: 1px solid #808080;
    border-right: 1px solid #fff;
}

.toolbar .pressed {
    padding: 2px;
    border: 1px solid;
    border-color: #808080 #fff #fff #808080;
    background: #f2f0ec;
    margin: 0 -4px;
}

.workspace {
    display: flex;
    flex: 1;
    gap: 4px;
    min-height: 0;
    margin-top: 3px;
}

/* Console tree */
.console-tree {
    display: flex;
    flex-direction: column;
    width: 196px;
    flex: none;
    border: 1px solid #808080;
    border-right-color: #fff;
    border-bottom-color: #fff;
    box-shadow: inset 1px 1px #404040;
    padding: 1px 1px 1px 2px;
    background: #fff;
    overflow: hidden;
}

.tree {
    flex: 1;
    overflow: hidden;
}

.tree li {
    display: flex;
    align-items: center;
    height: 16px;
    white-space: nowrap;
}

.tree li > svg {
    margin: 0 4px 0 6px;
}

.tree .root > svg {
    margin-left: 3px;
}

.tree .l1 { padding-left: 7px; }
.tree .l2 { padding-left: 26px; }
.tree .l3 { padding-left: 45px; }

.box {
    position: relative;
    flex: none;
    width: 9px;
    height: 9px;
    border: 1px solid #808080;
    background: linear-gradient(#000, #000) center / 5px 1px no-repeat #fff;
}

.box.plus {
    background: linear-gradient(#000, #000) center / 5px 1px no-repeat, linear-gradient(#000, #000) center / 1px 5px no-repeat #fff;
}

.box.none {
    border: 0;
    background: none;
}

.picked {
    background: #d4d0c8;
    padding: 0 2px;
    margin-left: -2px;
}

.picked.wide {
    padding: 0 30px 0 1px;
    margin-left: -1px;
}

.scroll-x {
    display: flex;
    height: 16px;
    flex: none;
}

.scroll-x button,
.scroll-y button {
    flex: none;
    display: grid;
    place-content: center;
    width: 16px;
    height: 16px;
}

.scroll-x button::before,
.scroll-y button::before {
    content: "";
    border: 4px solid transparent;
}

.scroll-x .left::before { border-right-color: #000; border-left-width: 0; }
.scroll-x .right::before { border-left-color: #000; border-right-width: 0; }
.scroll-y .up::before { border-bottom-color: #000; border-top-width: 0; }
.scroll-y .down::before { border-top-color: #000; border-bottom-width: 0; }

.track {
    flex: 1;
    background: repeating-conic-gradient(#fff 0 25%, #d4d0c8 0 50%) 0 0 / 2px 2px;
}

.thumb.long { width: 64%; }
.thumb.short { width: 36%; }

/* Snap-in */
.snapin {
    display: flex;
    flex: 1;
    flex-direction: column;
    min-width: 0;
    border: 1px solid #808080;
    border-right-color: #fff;
    border-bottom-color: #fff;
}

.snapin-title {
    height: 23px;
    padding-left: 13px;
    background: #404040;
    color: #fff;
    font-size: 13px;
    line-height: 22px;
    border-bottom: 1px solid #fff;
}

.snapin-title .en {
    font-size: 12px;
}

.snapin-body {
    display: flex;
    flex-direction: column;
    flex: 1;
    min-height: 0;
    margin-top: 1px;
    padding: 0 1px 2px 1px;
    border-top: 1px solid #404040;
    border-left: 1px solid #404040;
}

.navbar {
    display: flex;
    align-items: center;
    height: 33px;
    padding-right: 6px;
    padding-bottom: 2px;
}

.history {
    display: flex;
    gap: 5px;
    margin: 0 16px 0 3px;
    padding: 1px;
    border-radius: 14px;
    background: #c3c0ba;
}

.address {
    display: flex;
    flex: 1;
    align-items: center;
    gap: 9px;
    height: 23px;
    padding-left: 6px;
    border: 1px solid #808080;
    border-radius: 3px;
    background: #f8f7f6;
}

.address svg {
    margin-right: -3px;
}

.chevron {
    margin-left: 2px;
    border: 4px solid transparent;
    border-left-color: #000;
    border-right: 0;
}

.nav-tools {
    display: flex;
    gap: 7px;
    margin: 0 8px 0 6px;
}

.nav-help {
    display: flex;
    align-items: center;
    gap: 5px;
    height: 14px;
    padding-left: 3px;
    border-left: 2px solid #808080;
}

.columns {
    display: flex;
    flex: 1;
    gap: 6px;
    min-height: 0;
}

.pane-title {
    height: 21px;
    padding-left: 5px;
    background: #808080;
    font-size: 13px;
    line-height: 21px;
}

.connections {
    display: flex;
    flex-direction: column;
    flex: none;
    width: 152px;
    border: 1px solid #808080;
    border-top: 0;
    background: #fff;
}

.conn-tools {
    display: flex;
    align-items: center;
    gap: 6px;
    height: 25px;
    padding-left: 2px;
    border-bottom: 1px solid #808080;
    background: linear-gradient(#fafaf9, #d4d0c8);
}

.conn-tools button {
    display: flex;
    align-items: center;
    gap: 2px;
}

.bar {
    width: 2px;
    height: 14px;
    background: #808080;
}

.lined li {
    position: relative;
}

/* Dotted branches */
.lined li::before {
    content: "";
    position: absolute;
    width: 9px;
    height: 9px;
    margin-left: 4px;
    border-bottom: 1px dotted #808080;
}

.lined .down::before {
    top: 8px;
    width: 10px;
    border-left: 1px dotted #808080;
    border-top: 1px dotted #808080;
    border-bottom: 0;
}

.lined li:not(.down)::before {
    top: 0;
    border-left: 1px dotted #808080;
}

.lined li > svg {
    position: relative;
}

.center {
    display: flex;
    flex: 1;
    flex-direction: column;
    min-width: 0;
}

.page {
    display: flex;
    flex: 1;
    flex-direction: column;
    min-height: 0;
    padding: 12px;
    border: 1px solid #808080;
    background: #fff;
}

.page-title {
    display: flex;
    gap: 16px;
    height: 38px;
}

.page-title h2 {
    font-size: 17px;
    font-weight: normal;
    line-height: 18px;
}

.page-title .en {
    font-size: 15px;
}

.filterbar {
    display: flex;
    align-items: center;
    height: 27px;
    padding-left: 5px;
    border: 1px solid #d4d0c8;
    border-bottom-color: #808080;
    background: linear-gradient(#fafaf9, #d4d0c8);
    white-space: nowrap;
}

.filterbar label {
    width: 35px;
}

.filterbar select {
    width: 121px;
    height: 20px;
    margin-right: 3px;
    appearance: none;
    border: 1px solid #fff;
    background: linear-gradient(#000, #000) right 3px top 8px / 5px 1px no-repeat, linear-gradient(#000, #000) right 4px top 9px / 3px 1px no-repeat, linear-gradient(#000, #000) right 5px top 10px / 1px 1px no-repeat, linear-gradient(#d4d0c8, #d4d0c8) right / 10px 100% no-repeat #fff;
}

.filterbar button {
    display: flex;
    align-items: center;
}

.filterbar .go {
    margin-right: 8px;
    color: #808080;
}

.filterbar .caret.dim {
    margin-right: 6px;
}

.filterbar .bar {
    margin: 0 3px 0 8px;
}

.filterbar .overflow {
    width: 12px;
    height: 25px;
    margin-left: auto;
    padding: 18px 0 0 2px;
    align-items: flex-start;
    background: linear-gradient(#e2e0dc, #808080);
}

.overflow .caret {
    border-width: 4px 4px 0;
    box-shadow: 0 -3px #d4d0c8, 0 -4px #000;
}

.list {
    display: flex;
    flex: 1;
    min-height: 0;
    border: 1px solid #d4d0c8;
    border-top: 0;
}

.features {
    flex: 1;
    overflow: hidden;
}

.grid {
    display: grid;
    grid-template-columns: repeat(5, 75px);
    grid-auto-rows: 75px;
}

.grid a {
    display: flex;
    flex-direction: column;
    align-items: center;
    gap: 4px;
    padding: 0 2px;
    line-height: 12px;
    text-align: center;
    word-break: break-all;
}

.grid.cut {
    grid-auto-rows: 4px;
    height: 18px;
    overflow: hidden;
}

.cut-label {
    display: flex;
    grid-column: 4;
    align-items: flex-end;
    justify-content: center;
    height: 4px;
    line-height: 12px;
    overflow: hidden;
}

.focused > span {
    padding: 1px 2px;
    margin-top: -1px;
    outline: 1px dotted #000;
}

.group-title {
    height: 31px;
    padding: 9px 0 0 12px;
    margin-bottom: 7px;
    line-height: 16px;
    border-bottom: 1px solid;
    border-image: linear-gradient(90deg, #a6caf0 20%, #fff 68%) 1;
}

.group-title .en {
    font-size: 12px;
}

.scroll-y {
    display: flex;
    flex: none;
    flex-direction: column;
    width: 16px;
}

.track.above {
    flex: 0 0 35px;
}

.thumb.middle { height: 42%; }
.thumb.tall { height: 86%; }

.view-tabs {
    display: flex;
    gap: 1px;
    height: 25px;
    margin-left: 6px;
    padding-top: 3px;
}

.view-tabs button {
    display: flex;
    align-items: center;
    gap: 2px;
    height: 20px;
    padding: 0 3px 0 1px;
    border: 1px solid transparent;
}

.view-tabs .active {
    border-color: #0a246a;
    background: #fff;
}

/* Actions */
.actions {
    display: flex;
    flex-direction: column;
    flex: none;
    width: 200px;
    border: 1px solid #808080;
    border-top: 0;
}

.actions-body {
    display: flex;
    flex: 1;
    min-height: 0;
}

.action-list {
    flex: 1;
    padding: 4px 4px 0 0;
    overflow: hidden;
    background: linear-gradient(90deg, #fff, #d4d0c8 90%);
}

.action-list a,
.action-list h4 {
    display: flex;
    align-items: center;
    height: 20px;
    padding-left: 27px;
    color: #000080;
}

.action-list h4 {
    color: #000;
    font-size: 13px;
}

.action-list a svg {
    margin: 0 6px 0 -22px;
}

.action-list .off {
    color: #808080;
}

.action-list hr {
    height: 1px;
    margin: 2px 0 2px 2px;
    border: 0;
    background: linear-gradient(90deg, #d4d0c8, #666 50%);
}

.section-head {
    display: flex;
    align-items: center;
    justify-content: space-between;
    height: 24px;
    margin-bottom: 1px;
    padding: 0 9px 0 5px;
    background: linear-gradient(#d4d0c8, #f8f7f6);
    font-size: 13px;
    font-weight: bold;
}

.section-head svg {
    width: 16px;
    height: 16px;
}

.statusbar {
    display: flex;
    gap: 3px;
    height: 19px;
    margin: 3px 1px 1px 1px;
}

.cell {
    width: 132px;
    border: 1px solid #808080;
    border-right-color: #fff;
    border-bottom-color: #fff;
}

.cell.grow { flex: 1; }
.cell.slim { width: 81px; }

/* Background windows */
.behind-right {
    display: flex;
    flex-direction: column;
    padding-top: 73px;
    background: linear-gradient(#3a6ea5 73px, #d4d0c8 0);
    overflow: hidden;
}

.gray-bar {
    height: 20px;
    margin: 4px 0 7px;
    background: #b5b5b5;
    border-bottom: 1px solid #fff;
}

.field {
    height: 20px;
    border-top: 1px solid #404040;
    background: #fff;
}

.gray-block {
    height: 60px;
    border-bottom: 1px solid #404040;
}

.rows {
    flex: 1;
    padding-top: 7px;
    background: #fff;
}

.rows span {
    display: block;
    height: 22px;
    line-height: 22px;
    text-indent: -6px;
}

.rows .sel {
    background: #0a246a;
    color: #fff;
}

.behind-bottom {
    display: flex;
    grid-column: 1 / 3;
    gap: 3px;
}

.desktop { flex: 462; background: #3a6ea5; }
.sheet { flex: 157; background: #fff; }
.rest { flex: 432; background: #fff; }

.callout {
    position: absolute;
    left: 247px;
    top: 344px;
    width: 60px;
    height: 52px;
    border: 3px solid #fb3c3c;
    border-radius: 50%;
    color: #fb3c3c;
    font-size: 20px;
    line-height: 46px;
    text-align: center;
}

.pointer {
    position: absolute;
    left: 296px;
    top: 370px;
    width: 122px;
    height: 74px;
}

.watermark {
    position: absolute;
    right: 11px;
    bottom: 9px;
    color: #fff;
    opacity: .7;
    font: 16px/20px "Liberation Sans", sans-serif;
    text-shadow: 0 0 1px #888;
}
```
